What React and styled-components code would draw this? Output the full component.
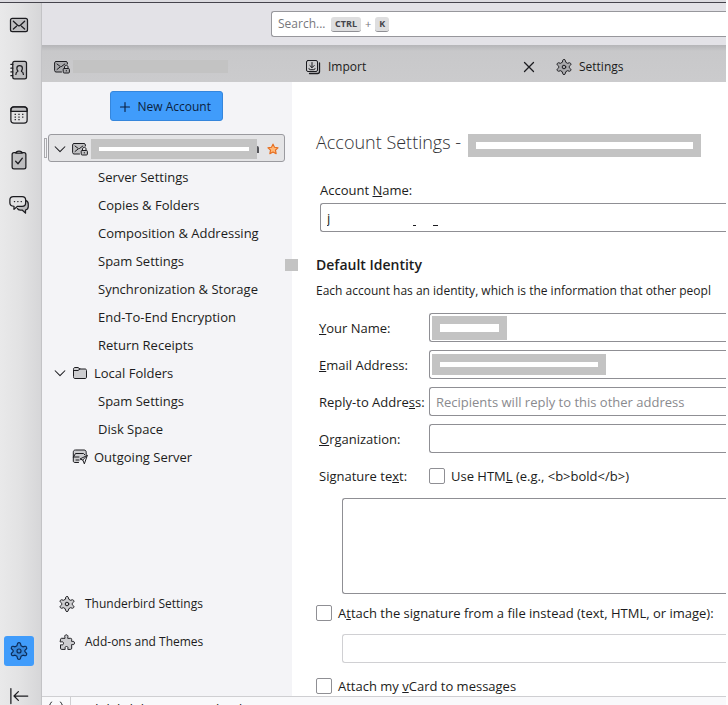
import styled, { createGlobalStyle, css } from "styled-components";

const GlobalStyle = createGlobalStyle`
  * {
    box-sizing: border-box;
  }

  body {
    margin: 0;
    overflow: hidden;
    color: #1c1c20;
    background-color: #fff;
    font-family: "Open Sans", "Noto Sans", sans-serif;
    font-size: 13px;
    line-height: 20px;
  }

  button, input, textarea {
    font: inherit;
    color: inherit;
  }
`;

const Window = styled.div`
  height: calc(100vh + 16px);
  padding-right: 2px;
  display: flex;
  flex-direction: column;
`;

const TitleEdge = styled.div`
  flex: none;
  height: 3px;
  background-color: #dcdbe0;
  border-bottom: 1px solid #45444c;
`;

const Body = styled.div`
  flex: 1;
  min-height: 0;
  display: flex;
`;

const Spaces = styled.nav`
  flex: none;
  width: 42px;
  padding: 7px 4px 10px;
  display: flex;
  flex-direction: column;
  align-items: stretch;
  gap: 15px;
  background: linear-gradient(to right, #e9e9ea, #e2e2e3 50%, #d6d6d8);
  border-right: 1px solid #c3c3c6;
`;

const SpaceButton = styled.button`
  width: 30px;
  height: 30px;
  padding: 0;
  display: flex;
  align-items: center;
  justify-content: center;
  border: none;
  border-radius: 3px;
  color: ${props => props.$active ? "#0b2a55" : "#1c1c20"};
  background-color: ${props => props.$active ? "#409cfb" : "transparent"};
`;

const SpacesBottom = styled.div`
  flex: 1;
  display: flex;
  flex-direction: column;
  justify-content: flex-end;
  gap: 15px;
`;

const Main = styled.div`
  flex: 1;
  min-width: 0;
  display: flex;
  flex-direction: column;
`;

const Toolbar = styled.header`
  flex: none;
  height: 42px;
  padding: 8px 0 8px 229px;
  background-color: #e3e2e7;
`;

const SearchBox = styled.label`
  height: 26px;
  padding: 0 6px;
  display: flex;
  align-items: center;
  border: 1px solid #97979c;
  border-right: none;
  border-radius: 3px 0 0 3px;
  color: #77777c;
  background-color: #fff;
`;

const SearchInput = styled.input`
  width: 53px;
  padding: 0;
  border: none;
  outline: none;
  background: none;
  font-size: 12px;

  &::placeholder {
    color: #77777c;
    opacity: 1;
  }
`;

const Key = styled.kbd`
  height: 15px;
  padding: 0 4px;
  border-radius: 3px;
  border-bottom: 1px solid #8f8f94;
  color: #45454a;
  background-color: #dededf;
  font-family: inherit;
  font-size: 9px;
  font-weight: 700;
  line-height: 14px;
`;

const Plus = styled.span`
  padding: 0 4px;
  font-size: 11px;
`;

const TabBar = styled.div`
  flex: none;
  height: 37px;
  display: flex;
  background: linear-gradient(#b5b5b8, #c8c8ca 6px, #cbcbcd);
`;

const Tab = styled.div`
  flex: none;
  width: 251px;
  padding: 6px 5px 0 12px;
  display: flex;
  align-items: center;
  gap: 7px;
  font-size: 12px;

  &:last-child {
    flex: 0 1 251px;
    min-width: 0;
  }
`;

const TabName = styled.span`
  flex: 1;
`;

const CloseButton = styled.button`
  width: 20px;
  height: 20px;
  padding: 0;
  display: flex;
  align-items: center;
  justify-content: center;
  border: none;
  background: none;
`;

const Panels = styled.div`
  flex: 1;
  min-height: 0;
  display: flex;
`;

const Sidebar = styled.aside`
  position: relative;
  flex: none;
  width: 250px;
  padding: 9px 7px 44px 6px;
  display: flex;
  flex-direction: column;
  background-color: #f4f4f7;
`;

const NewAccount = styled.button`
  align-self: center;
  width: 113px;
  height: 30px;
  margin-bottom: 13px;
  padding: 2px 11px 0 8px;
  display: flex;
  align-items: center;
  justify-content: space-between;
  border: 1px solid #3586dc;
  border-radius: 3px;
  color: #0b1f40;
  background-color: #409cfb;
  font-size: 12px;
  white-space: nowrap;
`;

const Tree = styled.ul`
  margin: 0;
  padding: 0;
  list-style: none;
`;

const TreeRow = styled.li`
  height: 28px;
  padding-top: 2px;
  padding-left: ${props => props.$level ? "50px" : "6px"};
  display: flex;
  align-items: center;
  gap: 6px;

  ${props => props.$selected && css`
    padding-left: 5px;
    padding-right: 5px;
    border: 1px solid #9a9a9f;
    border-radius: 3px;
    background-color: #e4e4e6;
  `}
`;

const Twisty = styled.span`
  width: 12px;
  display: flex;
`;

const AccountName = styled.span`
  flex: 1;
  display: flex;
  align-items: center;
  margin: 0 2px 0 -3px;
`;

const LetterEnd = styled.span`
  width: 2px;
  height: 7px;
  border-radius: 0 2px 0 0;
  background-color: #55555a;
`;

const Redaction = styled.span`
  flex: ${props => props.$width ? "none" : "1"};
  width: ${props => props.$width}px;
  height: ${props => props.$height || 20}px;
  border: 8px solid #c3c3c3;
  background-color: #fff;
`;

const TabRedaction = styled.span`
  width: 155px;
  height: 13px;
  margin-left: -4px;
  background-color: #c3c3c3;
`;

const FocusMark = styled.span`
  position: absolute;
  top: 56px;
  left: 2px;
  width: 3px;
  height: 20px;
  border: 1px solid #a9a9ad;
`;

const EdgeMark = styled.span`
  position: absolute;
  top: 177px;
  right: -6px;
  width: 13px;
  height: 12px;
  background-color: #c3c3c3;
`;

const SidebarLinks = styled.div`
  margin-top: auto;
  padding-left: 11px;
  display: flex;
  flex-direction: column;
  gap: 18px;
  font-size: 12px;
`;

const SidebarLink = styled.a`
  display: flex;
  align-items: center;
  gap: 10px;
  color: inherit;
  text-decoration: none;
`;

const Content = styled.main`
  flex: 1;
  min-width: 0;
  padding: 46px 0 0 24px;
  overflow: hidden;
  background-color: #fff;
`;

const TitleRow = styled.div`
  height: 28px;
  margin-bottom: 24px;
  display: flex;
  align-items: center;
  gap: 7px;
`;

const TitleRedaction = styled.span`
  padding-top: 6px;
  display: flex;
`;

const Title = styled.h1`
  margin: 0;
  color: #303034;
  font-size: 18px;
  font-weight: 300;
  line-height: 24px;
`;

const AccountField = styled.div`
  padding-left: 4px;
  display: flex;
  flex-direction: column;
  gap: 3px;
  margin-bottom: 23px;
`;

const fieldBorder = css`
  border: 1px solid ${props => props.disabled ? "#d0d0d3" : "#8f8f94"};
  border-right: none;
  border-radius: 3px 0 0 3px;
  background-color: #fff;
  outline: none;
`;

const TextInput = styled.input`
  ${fieldBorder}
  width: 100%;
  height: 29px;
  padding: 0 6px;

  &::placeholder {
    color: #8a8a8e;
    opacity: 1;
  }
`;

const Heading = styled.h2`
  margin: 0 0 6px;
  font-size: 14px;
  font-weight: 600;
  line-height: 20px;
`;

const Description = styled.p`
  margin: 0 0 12px;
  font-size: 12px;
  white-space: nowrap;
`;

const Fields = styled.div`
  padding-left: 3px;
  display: grid;
  grid-template-columns: 110px 1fr;
  row-gap: 8px;
  align-items: center;
`;

const FieldCell = styled.div`
  display: grid;
  align-items: center;

  > * {
    grid-area: 1 / 1;
  }

  > ${Redaction} {
    margin-left: 3px;
  }
`;

const NameTraces = styled.span`
  align-self: end;
  display: flex;
  gap: 17px;
  padding: 0 0 6px 93px;
`;

const Trace = styled.span`
  width: ${props => props.$width}px;
  height: 1px;
  background-color: #1c1c20;
`;

const CheckRow = styled.div`
  height: 29px;
  display: flex;
  align-items: center;
  gap: 6px;
`;

const Checkbox = styled.input`
  appearance: none;
  width: 16px;
  height: 16px;
  margin: 0;
  border: 1px solid #8f8f94;
  border-radius: 2px;
  background-color: #fff;
`;

const Indented = styled.div`
  padding-left: 26px;
`;

const FileRow = styled(Indented)`
  padding-top: 7px;
  padding-bottom: 8px;
`;

const Signature = styled.textarea`
  ${fieldBorder}
  display: block;
  width: 100%;
  height: 96px;
  margin: 8px 0 4px;
  resize: none;
`;

const StatusBar = styled.footer`
  flex: none;
  height: 25px;
  display: flex;
  align-items: center;
  border-top: 1px solid #cfcfd2;
  background-color: #f9f9fb;
`;

const StatusIcon = styled.span`
  align-self: stretch;
  width: 29px;
  display: flex;
  align-items: center;
  justify-content: center;
  border-right: 1px solid #cfcfd2;
`;

const StatusText = styled.span`
  padding-left: 9px;
`;

const Icon = ({ size = 16, children }) => (
  <svg
    width={size}
    height={size}
    viewBox="0 0 16 16"
    fill="none"
    stroke="currentColor"
    strokeWidth="1"
    strokeLinecap="round"
    strokeLinejoin="round"
  >
    {children}
  </svg>
);

const shade = { fill: "currentColor", fillOpacity: 0.18 };

const MailIcon = () => (
  <Icon size={20}>
    <rect x="1.2" y="2.7" width="13.6" height="10.6" rx="1.5" {...shade} />
    <path d="M3.5 5l3.4 3.2c.6.6 1.6.6 2.2 0L12.5 5M3.5 11.2L6 9M12.5 11.2L10 9" />
  </Icon>
);

const AddressBookIcon = () => (
  <Icon size={20}>
    <rect x="3" y="1" width="11" height="14" rx="1.5" {...shade} />
    <path d="M1.5 3.5h1.5M1.5 6.5h1.5M1.5 9.5h1.5M1.5 12.5h1.5" />
    <path d="M5.5 11.5c0-1.3.4-2 1.5-2.3v-.6c-.5-.6-.7-1.300-.7-2.100 0-1.200 1-2 2.200-2s2.200.8 2.200 2c0 .8-.2 1.500-.7 2.100v.6c1.100.3 1.500 1 1.500 2.300" />
  </Icon>
);

const CalendarIcon = () => (
  <Icon size={20}>
    <rect x="1.5" y="1.5" width="13" height="13" rx="2.5" />
    <path d="M1.5 5V4c0-1.500.8-2.500 2.500-2.500h8c1.700 0 2.500 1 2.500 2.500v1z" {...shade} />
    <path d="M4.500 7.500h1M7.500 7.500h1M10.500 7.500h1M4.500 9.600h1M7.500 9.600h1M10.500 9.600h1M4.500 11.700h1M7.500 11.700h1" strokeLinecap="butt" />
  </Icon>
);

const TasksIcon = () => (
  <Icon size={20}>
    <rect x="2.5" y="2" width="11" height="13" rx="1.5" {...shade} />
    <path d="M5.500 2.500C5.500 1.300 6.500.8 8 .8s2.500.5 2.500 1.700z" fill="#e2e2e3" />
    <path d="M5.300 9l1.900 2 3.500-4.500" />
  </Icon>
);

const ChatIcon = () => (
  <Icon size={20}>
    <path d="M13.500 4.500c1.200.4 1.900 1.300 1.900 2.700v2c0 1.500-.8 2.500-2.200 2.800v2.500L10.500 12H9c-1.200 0-1.900-.4-2.300-1.200" {...shade} />
    <path d="M3.500 1.200h7c1.700 0 2.800 1 2.800 2.600v2.600c0 1.600-1.100 2.600-2.800 2.600H6.800L4 11.500V9C1.800 8.900.7 8 .7 6.400V3.800c0-1.600 1.100-2.600 2.800-2.600z" fill="#e2e2e3" />
    <path d="M4.300 5.200h.2M7 5.200h.2M9.700 5.200h.2" />
  </Icon>
);

const GearIcon = ({ size = 16 }) => (
  <Icon size={size}>
    <path d="M6.600 1.600C6.700.9 7.100.5 8 .5s1.300.4 1.400 1.100l.4 1.700 1.700 1 1.700-.5c.7-.2 1.100 0 1.500.8.4.7.3 1.200-.2 1.600L13.200 7.400v1.200l1.300 1.200c.5.4.6.9.2 1.600-.4.8-.8 1-1.500.8l-1.700-.5-1.700 1-.4 1.700c-.1.7-.5 1.100-1.400 1.100s-1.300-.4-1.400-1.100l-.4-1.700-1.700-1-1.700.5c-.7.2-1.100 0-1.500-.8-.4-.7-.3-1.200.2-1.600l1.300-1.200V7.400L1.500 6.200C1 5.800.9 5.300 1.300 4.600c.4-.8.8-1 1.500-.8l1.700.5 1.700-1z" {...shade} />
    <circle cx="8" cy="8" r="1.800" />
  </Icon>
);

const CollapseIcon = () => (
  <Icon size={20}>
    <path d="M1.500 2v12M4 8h11M7.500 4.500L4 8l3.500 3.500" />
  </Icon>
);

const MailLockIcon = () => (
  <Icon size={16}>
    <path d="M7.500 13H2c-.8 0-1.400-.6-1.400-1.400V3.900c0-.8.6-1.400 1.400-1.400h10c.8 0 1.400.6 1.400 1.400V5" {...shade} />
    <path d="M3 5l3.500 2.700L3 10.500M10.800 5L7.500 7.500" />
    <rect x="9.200" y="9.500" width="6.200" height="4.500" rx="1" {...shade} />
    <path d="M10.500 9.300V8c0-2.300 3.500-2.300 3.500 0v1.300M12.300 11.500v.5" />
  </Icon>
);

const ImportIcon = () => (
  <Icon size={16}>
    <rect x="1.500" y="1.500" width="11" height="11" rx="1.500" />
    <path d="M14.500 4v8.500c0 1.200-.8 2-2 2H4.500" strokeWidth="1.300" />
    <path d="M7 3.500v5M4.800 6.500L7 8.700l2.200-2.200M4 9.500c0 .8.400 1.200 1.200 1.200h3.600c.8 0 1.200-.4 1.200-1.200" />
  </Icon>
);

const CloseIcon = () => (
  <Icon size={16}>
    <path d="M3.500 3.500l9 9M12.500 3.500l-9 9" strokeWidth="1.300" />
  </Icon>
);

const PlusIcon = () => (
  <Icon size={12}>
    <path d="M8 2v12M2 8h12" strokeWidth="1.500" />
  </Icon>
);

const ChevronIcon = () => (
  <Icon size={12}>
    <path d="M1.500 5L8 11.500 14.500 5" strokeWidth="1.400" />
  </Icon>
);

const StarIcon = () => (
  <Icon size={12}>
    <path d="M8 1.500l2 4.200 4.700.6-3.400 3.200.9 4.700L8 12l-4.200 2.200.9-4.700L1.300 6.300 6 5.700z" fill="#ffb878" stroke="#e66d1e" strokeWidth="1.500" />
  </Icon>
);

const FolderIcon = () => (
  <Icon size={16}>
    <path d="M1.500 4c0-.9.600-1.500 1.500-1.500h3L8 4h5c1 0 1.500.600 1.500 1.500V12c0 1-.5 1.500-1.500 1.500H3c-1 0-1.500-.5-1.500-1.500z" {...shade} />
    <path d="M1.500 5.500H6L8 4" />
  </Icon>
);

const OutgoingIcon = () => (
  <Icon size={16}>
    <path d="M6.500 13.500H3c-1.100 0-1.700-.6-1.700-1.500V3.300C1.300 1.900 2 1 3.500 1h8.500c1.500 0 2.200.9 2.200 2.300V5.500" {...shade} />
    <path d="M1.500 8l2-3.500h8L13 6M1.500 8H7M4 11h3" />
    <path d="M15 6.500l-7 3.500 2.800 1 1.400 3.500zM10.800 11L15 6.500" fill="#f4f4f7" />
  </Icon>
);

const AddonIcon = () => (
  <Icon size={16}>
    <path d="M1.500 5.500c0-.8.400-1.200 1.200-1.200H6V3.800C5.300 2 6 .8 7.300.8S9.400 2 8.700 3.800v.5h2.800c.8 0 1.200.4 1.200 1.200v2h.6c1.200-.5 2.200.1 2.200 1.500s-1 2-2.200 1.500h-.6v3.700c0 .8-.4 1.200-1.200 1.200H8.800v-.7c.5-1.300 0-2.200-1.300-2.200s-1.800.9-1.300 2.200v.7H2.700c-.8 0-1.200-.4-1.200-1.200V10.800h.7C3.700 11.300 4.500 10.500 4.500 9.300S3.700 7.400 2.200 7.900h-.7z" {...shade} />
  </Icon>
);

const OnlineIcon = () => (
  <Icon size={16}>
    <path d="M3.500 1C0 5 0 11 3.500 15M12.500 1c3.500 4 3.500 10 0 14M6 4.500c-2 2-2 5 0 7M10 4.500c2 2 2 5 0 7" />
    <circle cx="8" cy="8" r=".8" />
  </Icon>
);

const accountPages = [
  "Server Settings",
  "Copies & Folders",
  "Composition & Addressing",
  "Spam Settings",
  "Synchronization & Storage",
  "End-To-End Encryption",
  "Return Receipts",
];

const SpacesToolbar = () => (
  <Spaces>
    <SpaceButton aria-label="Mail"><MailIcon /></SpaceButton>
    <SpaceButton aria-label="Address Book"><AddressBookIcon /></SpaceButton>
    <SpaceButton aria-label="Calendar"><CalendarIcon /></SpaceButton>
    <SpaceButton aria-label="Tasks"><TasksIcon /></SpaceButton>
    <SpaceButton aria-label="Chat"><ChatIcon /></SpaceButton>
    <SpacesBottom>
      <SpaceButton $active aria-label="Settings"><GearIcon size={18} /></SpaceButton>
      <SpaceButton aria-label="Collapse"><CollapseIcon /></SpaceButton>
    </SpacesBottom>
  </Spaces>
);

const AccountTree = () => (
  <Sidebar>
    <NewAccount><PlusIcon />New Account</NewAccount>
    <FocusMark />
    <Tree>
      <TreeRow $selected>
        <Twisty><ChevronIcon /></Twisty>
        <MailLockIcon />
        <AccountName><Redaction /><LetterEnd /></AccountName>
        <StarIcon />
      </TreeRow>
      {accountPages.map(page => (
        <TreeRow key={page} $level={1}>{page}</TreeRow>
      ))}
      <TreeRow>
        <Twisty><ChevronIcon /></Twisty>
        <FolderIcon />
        Local Folders
      </TreeRow>
      <TreeRow $level={1}>Spam Settings</TreeRow>
      <TreeRow $level={1}>Disk Space</TreeRow>
      <TreeRow>
        <Twisty />
        <OutgoingIcon />
        Outgoing Server
      </TreeRow>
    </Tree>
    <SidebarLinks>
      <SidebarLink href="#settings"><GearIcon />Thunderbird Settings</SidebarLink>
      <SidebarLink href="#addons"><AddonIcon />Add-ons and Themes</SidebarLink>
    </SidebarLinks>
    <EdgeMark />
  </Sidebar>
);

const AccountSettings = () => (
  <Content>
    <TitleRow>
      <Title>Account Settings -</Title>
      <TitleRedaction><Redaction $width={233} $height={23} /></TitleRedaction>
    </TitleRow>
    <AccountField>
      <label htmlFor="account">Account <u>N</u>ame:</label>
      <FieldCell>
        <TextInput id="account" defaultValue="j" />
        <NameTraces>
          <Trace $width={3} />
          <Trace $width={5} />
        </NameTraces>
      </FieldCell>
    </AccountField>

    <Heading>Default Identity</Heading>
    <Description>
      Each account has an identity, which is the information that other peopl
    </Description>

    <Fields>
      <label htmlFor="name"><u>Y</u>our Name:</label>
      <FieldCell>
        <TextInput id="name" />
        <Redaction $width={75} $height={24} />
      </FieldCell>
      <label htmlFor="email"><u>E</u>mail Address:</label>
      <FieldCell>
        <TextInput id="email" />
        <Redaction $width={174} $height={21} />
      </FieldCell>
      <label htmlFor="reply">Reply-to Addre<u>s</u>s:</label>
      <TextInput id="reply" placeholder="Recipients will reply to this other address" />
      <label htmlFor="organization"><u>O</u>rganization:</label>
      <TextInput id="organization" />
      <label htmlFor="signature">Signature te<u>x</u>t:</label>
      <CheckRow>
        <Checkbox type="checkbox" id="html" />
        <label htmlFor="html">Use HTM<u>L</u> (e.g., &lt;b&gt;bold&lt;/b&gt;)</label>
      </CheckRow>
    </Fields>

    <Indented>
      <Signature id="signature" />
    </Indented>
    <CheckRow>
      <Checkbox type="checkbox" id="attach" />
      <label htmlFor="attach">A<u>t</u>tach the signature from a file instead (text, HTML, or image):</label>
    </CheckRow>
    <FileRow>
      <TextInput disabled aria-label="Signature file" />
    </FileRow>
    <CheckRow>
      <Checkbox type="checkbox" id="vcard" />
      <label htmlFor="vcard">Attach my <u>v</u>Card to messages</label>
    </CheckRow>
  </Content>
);

const App = () => (
  <>
    <GlobalStyle />
    <Window>
      <TitleEdge />
      <Body>
        <SpacesToolbar />
        <Main>
          <Toolbar>
            <SearchBox>
              <SearchInput placeholder="Search..." aria-label="Search" />
              <Key>CTRL</Key>
              <Plus>+</Plus>
              <Key>K</Key>
            </SearchBox>
          </Toolbar>
          <TabBar>
            <Tab><MailLockIcon /><TabRedaction /></Tab>
            <Tab>
              <ImportIcon />
              <TabName>Import</TabName>
              <CloseButton aria-label="Close tab"><CloseIcon /></CloseButton>
            </Tab>
            <Tab><GearIcon /><TabName>Settings</TabName></Tab>
          </TabBar>
          <Panels>
            <AccountTree />
            <AccountSettings />
          </Panels>
          <StatusBar>
            <StatusIcon><OnlineIcon /></StatusIcon>
            <StatusText>jadulabdul1000: Downloading</StatusText>
          </StatusBar>
        </Main>
      </Body>
    </Window>
  </>
);

export default App;
